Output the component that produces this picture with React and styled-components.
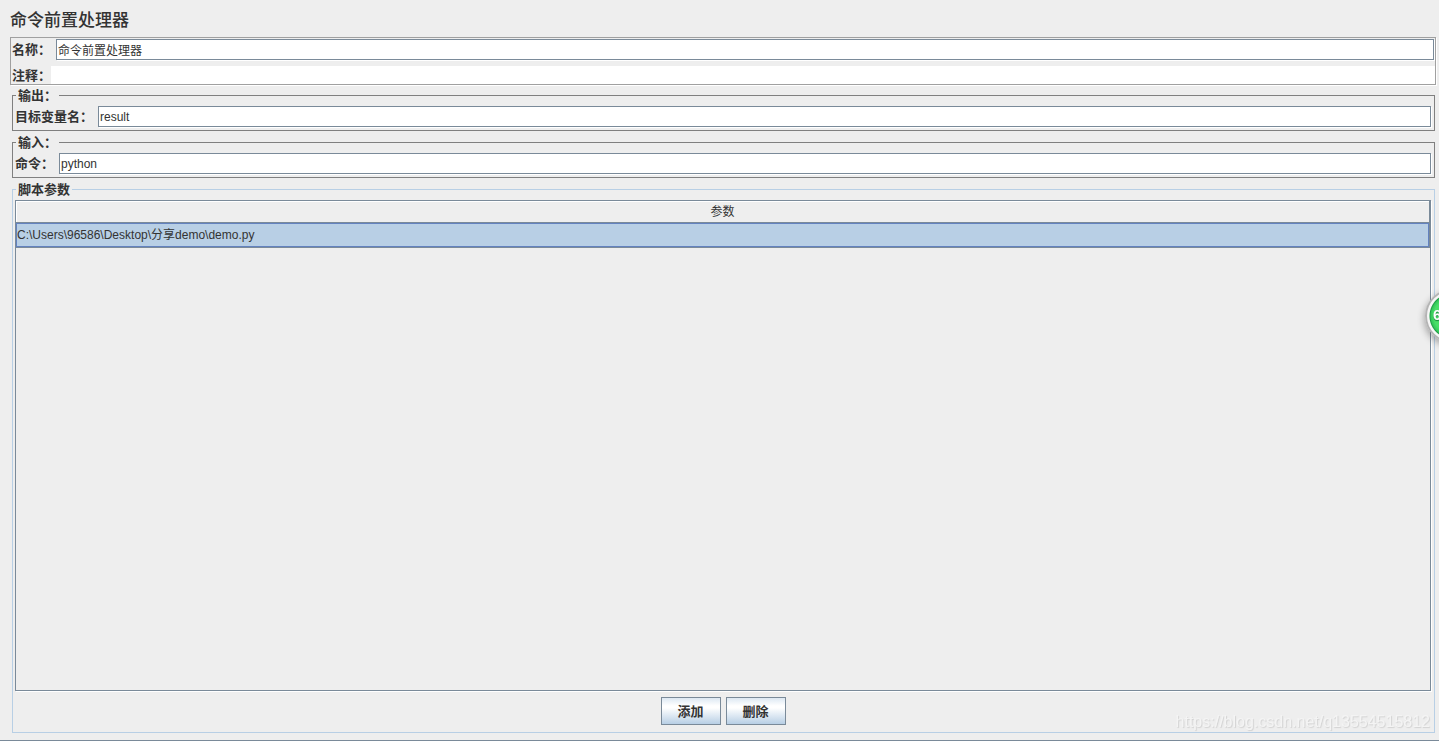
import React, { useState } from "react";
import styled, { createGlobalStyle } from "styled-components";

const line = "#7a8a99";
const selectedFill = "#b8cfe5";
const panel = "#eeeeee";

const GlobalStyle = createGlobalStyle`
  * { box-sizing: border-box; }
  body {
    margin: 0;
    background: ${panel};
    color: #333333;
    font: 12px/15px "Liberation Sans", "Noto Sans CJK SC", sans-serif;
  }
`;

const Page = styled.form`
  display: flex;
  flex-direction: column;
  min-height: 100vh;
  padding: 8px 3px 7px 10px;
  border-bottom: 1px solid ${line};
`;

const Title = styled.h1`
  margin: 0 0 3px;
  font-size: 17px;
  line-height: 26px;
  font-weight: 500;
`;

const NameBox = styled.div`
  display: flex;
  flex-direction: column;
  gap: 6px;
  margin-bottom: 3px;
  padding: 1px 0 0 1px;
  border: 1px solid #a0a0a0;
  box-shadow: 1px 1px 0 #ffffff;
`;

const Row = styled.div`
  display: flex;
  align-items: center;
  gap: ${(p) => (p.$tight ? "0" : "5px")};
  padding-right: ${(p) => (p.$inset ? "1px" : "0")};
`;

const Label = styled.label`
  flex: none;
  font-size: 13px;
  font-weight: 700;
`;

const TextInput = styled.input`
  flex: 1;
  min-width: 0;
  height: ${(p) => (p.$plain ? "18px" : "21px")};
  padding: 0 1px;
  border: ${(p) => (p.$plain ? "none" : `1px solid ${line}`)};
  border-radius: 0;
  outline: none;
  background: #ffffff;
  box-shadow: ${(p) => (p.$plain ? "none" : "1px 1px 0 #ffffff")};
  color: inherit;
  font: inherit;
`;

const Group = styled.fieldset`
  min-width: 0;
  margin: 0 1px ${(p) => (p.$last ? "0" : "4px")} 2px;
  padding: 3px 3px ${(p) => (p.$last ? "7px" : "3px")} 2px;
  border: 1px solid ${(p) => (p.$last ? selectedFill : "#808080")};
`;

const Legend = styled.legend`
  margin-left: 1px;
  padding: 0 2px;
  font-size: 13px;
  font-weight: 700;
`;

const TablePane = styled.div`
  min-height: calc(100vh - 250px);
  margin-bottom: 6px;
  border: 1px solid ${line};
  box-shadow: 1px 1px 0 #ffffff;
`;

const Table = styled.table`
  width: 100%;
  border-collapse: separate;
  border-spacing: 0;
`;

const HeadCell = styled.th`
  height: 22px;
  padding: 2px 0 0;
  border-right: 1px solid ${line};
  border-bottom: 1px solid ${line};
  box-shadow: inset 1px 1px 0 #ffffff;
  font-weight: 400;
`;

const Cell = styled.td`
  height: 25px;
  padding: 0 1px;
  border-right: 1px solid ${line};
  border-bottom: 1px solid ${line};
  background: ${selectedFill};
  box-shadow: inset 0 0 0 1px #6382bf;
`;

const Actions = styled.div`
  display: flex;
  justify-content: center;
  gap: 5px;
`;

const Button = styled.button`
  width: 60px;
  height: 28px;
  padding: 0;
  border: 1px solid ${line};
  border-radius: 0;
  background: linear-gradient(#dde8f3 0%, #ffffff 30%, #ffffff 38%, ${selectedFill} 100%);
  color: inherit;
  font: inherit;
  font-size: 13px;
  font-weight: 700;
`;

const Watermark = styled.div`
  position: fixed;
  right: 9px;
  bottom: 9px;
  color: #f4f4f4;
  font-size: 16px;
  line-height: 20px;
  text-shadow: 1px 1px 1px #d2d2d2;
  pointer-events: none;
`;

const Badge = styled.div`
  position: fixed;
  top: 289px;
  right: -40px;
  width: 54px;
  height: 54px;
  padding-left: 6px;
  border: 2px solid #b4b4b4;
  border-radius: 50%;
  background: radial-gradient(circle, #4ade68 0 18px, #34c85a 21px, #1f9c45 22px, #f6f6f6 23px);
  box-shadow: -1px 3px 7px rgba(0, 0, 0, 0.3);
  color: #ffffff;
  font-size: 15px;
  font-weight: 700;
  line-height: 48px;
  text-shadow: 0 1px 1px #16803a;
`;

export default function App() {
  const [name, setName] = useState("命令前置处理器");
  const [comment, setComment] = useState("");
  const [variable, setVariable] = useState("result");
  const [command, setCommand] = useState("python");

  return (
    <>
      <GlobalStyle />
      <Page onSubmit={(e) => e.preventDefault()}>
        <Title>命令前置处理器</Title>
        <NameBox>
          <Row $inset>
            <Label htmlFor="name">名称：</Label>
            <TextInput id="name" value={name} onChange={(e) => setName(e.target.value)} />
          </Row>
          <Row $tight>
            <Label htmlFor="comment">注释：</Label>
            <TextInput id="comment" $plain value={comment} onChange={(e) => setComment(e.target.value)} />
          </Row>
        </NameBox>
        <Group>
          <Legend>输出：</Legend>
          <Row>
            <Label htmlFor="variable">目标变量名：</Label>
            <TextInput id="variable" value={variable} onChange={(e) => setVariable(e.target.value)} />
          </Row>
        </Group>
        <Group>
          <Legend>输入：</Legend>
          <Row>
            <Label htmlFor="command">命令：</Label>
            <TextInput id="command" value={command} onChange={(e) => setCommand(e.target.value)} />
          </Row>
        </Group>
        <Group $last>
          <Legend>脚本参数</Legend>
          <TablePane>
            <Table>
              <thead>
                <tr>
                  <HeadCell scope="col">参数</HeadCell>
                </tr>
              </thead>
              <tbody>
                <tr>
                  <Cell>C:\Users\96586\Desktop\分享demo\demo.py</Cell>
                </tr>
              </tbody>
            </Table>
          </TablePane>
          <Actions>
            <Button type="button">添加</Button>
            <Button type="button">删除</Button>
          </Actions>
        </Group>
      </Page>
      <Watermark>https://blog.csdn.net/q13554515812</Watermark>
      <Badge>6</Badge>
    </>
  );
}
